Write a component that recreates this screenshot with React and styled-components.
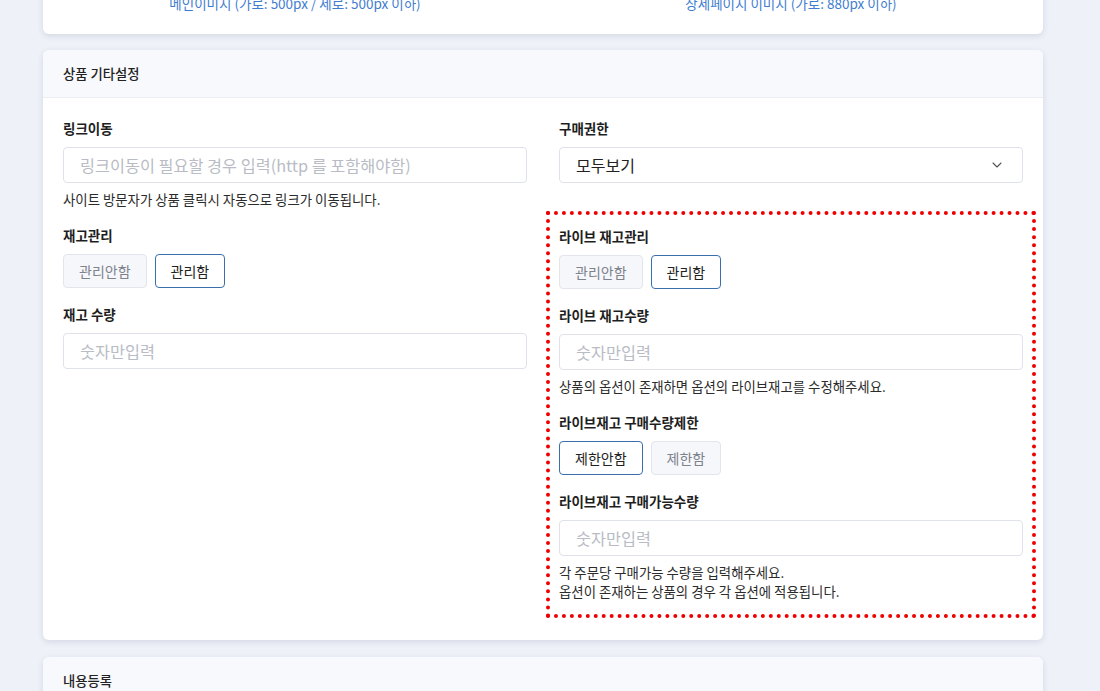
import React from 'react'
import styled, { createGlobalStyle } from 'styled-components'
import { ChevronDown } from 'lucide-react'

const GlobalStyle = createGlobalStyle`
  html, body {
    margin: 0;
    padding: 0;
    background: #eef1f8;
    overflow: hidden;
  }
  body {
    font-family: 'Noto Sans CJK KR', 'Noto Sans', sans-serif;
    color: #222;
  }
  * {
    box-sizing: border-box;
  }
`

const Page = styled.div`
  display: flex;
  flex-direction: column;
  gap: 16px;
  padding: 0 57px 0 43px;
  width: 1100px;
`

const TopCard = styled.section`
  background: #fff;
  border-radius: 6px;
  box-shadow: 0 2px 6px rgba(30, 40, 70, 0.12);
  display: grid;
  grid-template-columns: 1fr 1fr;
  column-gap: 32px;
  margin-top: -40px;
  padding: 34px 20px 22px;
`

const ImageNote = styled.p`
  color: #3f7dcf;
  font-size: 13.5px;
  line-height: 18px;
  margin: 0;
  text-align: center;
`

const Card = styled.section`
  background: #fff;
  border-radius: 6px;
  box-shadow: 0 2px 6px rgba(30, 40, 70, 0.12);
  overflow: hidden;
`

const CardHeader = styled.header`
  align-items: center;
  background: #f8f9fc;
  border-bottom: 1px solid #eceef3;
  display: flex;
  font-size: 13.3px;
  font-weight: 500;
  height: 48px;
  padding: 0 20px;
`

const CardBody = styled.div`
  display: grid;
  grid-template-columns: 464px 464px;
  column-gap: 32px;
  padding: 20px 20px 22px;
  align-items: start;
`

const Column = styled.div`
  display: flex;
  flex-direction: column;
  gap: 16px;
`

const Field = styled.div`
  display: flex;
  flex-direction: column;
`

const Label = styled.label`
  color: #1e1e1e;
  font-size: 13.5px;
  font-weight: 700;
  line-height: 20px;
  margin-bottom: 9px;
`

const TextInput = styled.input`
  background: #fff;
  border: 1px solid #dfe2ea;
  border-radius: 4px;
  color: #222;
  font-family: inherit;
  font-size: 16.3px;
  height: 36px;
  outline: none;
  padding: 0 16px;
  width: 100%;

  &::placeholder {
    color: #b9bcc5;
  }
`

const SelectBox = styled.div`
  align-items: center;
  border: 1px solid #dfe2ea;
  border-radius: 4px;
  color: #222;
  display: flex;
  font-size: 16px;
  height: 36px;
  justify-content: space-between;
  padding: 0 17px 0 16px;
`

const Help = styled.p`
  color: #2b2b2b;
  font-size: 13.4px;
  line-height: 19px;
  margin: 7px 0 0;
`

const ButtonRow = styled.div`
  display: flex;
  gap: 8px;
`

const ToggleButton = styled.button`
  background: ${p => (p.$active ? '#fff' : '#f6f7fa')};
  border: 1px solid ${p => (p.$active ? '#3a6fae' : '#e2e5eb')};
  border-radius: 4px;
  color: ${p => (p.$active ? '#222' : '#7d828c')};
  font-family: inherit;
  font-size: 14px;
  height: 34px;
  padding: 0 15px;
`

const Highlight = styled.div`
  border: 4px dotted #ee0000;
  display: flex;
  flex-direction: column;
  gap: 16px;
  margin: 12px -13px 0;
  padding: 11px 9px 13px;
`

const NextCard = styled(Card)`
  margin-top: 1px;
`

function Toggle({ options, active }) {
  return (
    <ButtonRow>
      {options.map(o => (
        <ToggleButton key={o} $active={o === active}>
          {o}
        </ToggleButton>
      ))}
    </ButtonRow>
  )
}

export default function App() {
  return (
    <>
      <GlobalStyle />
      <Page>
        <TopCard>
          <ImageNote>메인이미지 (가로: 500px / 세로: 500px 이하)</ImageNote>
          <ImageNote>상세페이지 이미지 (가로: 880px 이하)</ImageNote>
        </TopCard>

        <Card>
          <CardHeader>상품 기타설정</CardHeader>
          <CardBody>
            <Column>
              <Field>
                <Label>링크이동</Label>
                <TextInput placeholder="링크이동이 필요할 경우 입력(http 를 포함해야함)" />
                <Help>사이트 방문자가 상품 클릭시 자동으로 링크가 이동됩니다.</Help>
              </Field>
              <Field>
                <Label>재고관리</Label>
                <Toggle options={['관리안함', '관리함']} active="관리함" />
              </Field>
              <Field>
                <Label>재고 수량</Label>
                <TextInput placeholder="숫자만입력" />
              </Field>
            </Column>

            <Column>
              <Field>
                <Label>구매권한</Label>
                <SelectBox>
                  <span>모두보기</span>
                  <ChevronDown size={16} strokeWidth={1.6} color="#555" />
                </SelectBox>
              </Field>
              <Highlight>
                <Field>
                  <Label>라이브 재고관리</Label>
                  <Toggle options={['관리안함', '관리함']} active="관리함" />
                </Field>
                <Field>
                  <Label>라이브 재고수량</Label>
                  <TextInput placeholder="숫자만입력" />
                  <Help>상품의 옵션이 존재하면 옵션의 라이브재고를 수정해주세요.</Help>
                </Field>
                <Field>
                  <Label>라이브재고 구매수량제한</Label>
                  <Toggle options={['제한안함', '제한함']} active="제한안함" />
                </Field>
                <Field>
                  <Label>라이브재고 구매가능수량</Label>
                  <TextInput placeholder="숫자만입력" />
                  <Help>
                    각 주문당 구매가능 수량을 입력해주세요.
                    <br />
                    옵션이 존재하는 상품의 경우 각 옵션에 적용됩니다.
                  </Help>
                </Field>
              </Highlight>
            </Column>
          </CardBody>
        </Card>

        <NextCard>
          <CardHeader>내용등록</CardHeader>
        </NextCard>
      </Page>
    </>
  )
}
